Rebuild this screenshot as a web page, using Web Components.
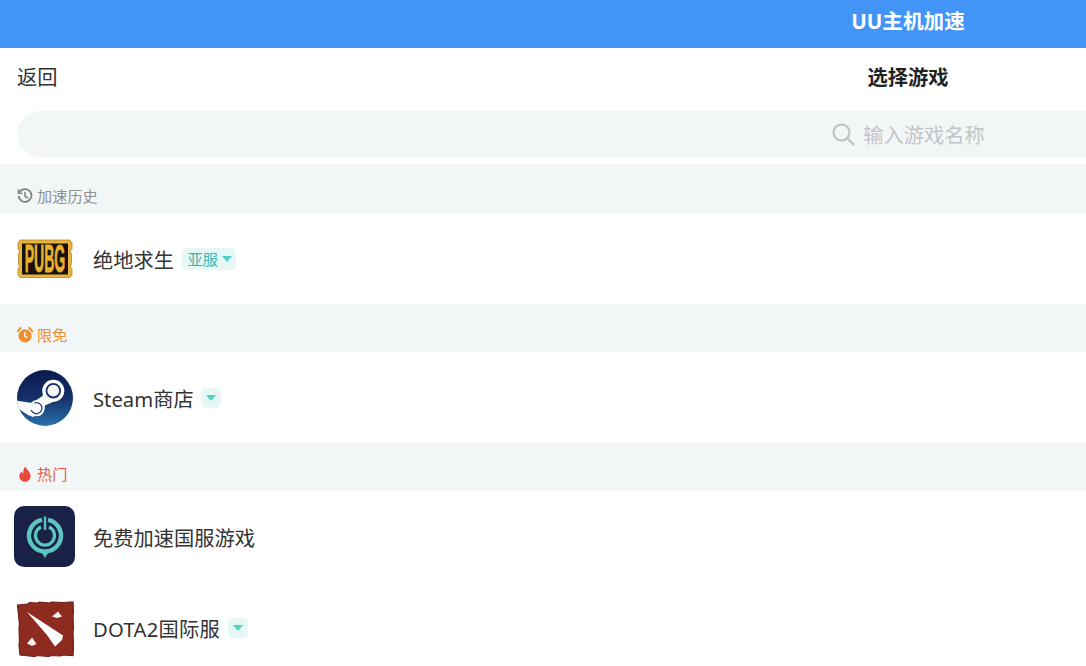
<!DOCTYPE html>
<html lang="zh"><head><meta charset="utf-8"><title>UU主机加速</title>
<style>
html,body{margin:0;padding:0;width:1086px;height:666px;overflow:hidden;background:#fff}
body{font-family:"Noto Sans","Noto Sans CJK SC",sans-serif;color:#333}
</style></head><body>
<uu-app>
  <uu-header slot="top">UU主机加速</uu-header>
  <uu-nav slot="top"></uu-nav>
  <uu-search slot="top"></uu-search>
  <uu-section color="#8e9194" icon="history">加速历史</uu-section>
  <uu-row name="绝地求生" tag="亚服" logo="pubg"></uu-row>
  <uu-section color="#ee8f30" icon="alarm">限免</uu-section>
  <uu-row name="Steam商店" tag="" logo="steam" arrow></uu-row>
  <uu-section color="#e9594a" icon="fire">热门</uu-section>
  <uu-row name="免费加速国服游戏" logo="uu"></uu-row>
  <uu-row name="DOTA2国际服" tag="" logo="dota" arrow ls=".25px"></uu-row>
</uu-app>
<script>
const def=(n,html,init)=>customElements.define(n,class extends HTMLElement{
  constructor(){super();this.attachShadow({mode:'open'}).innerHTML=html;}
  connectedCallback(){init&&init(this,this.shadowRoot);}
});
def('uu-app',`<style>:host{display:block;width:1816px}.top{border-bottom:1px solid #f0f1f2;padding-bottom:7px}</style><div class="top"><slot name="top"></slot></div><slot></slot>`);
def('uu-header',`<style>:host{display:flex;justify-content:center;align-items:center;height:48px;padding-bottom:6px;box-sizing:border-box;background:#4294f7;color:#fff;font-size:20.6px;font-weight:700;line-height:28px}</style><slot></slot>`);
def('uu-nav',`<style>:host{display:grid;grid-template-columns:1fr auto 1fr;align-items:center;height:63px;padding:0 17px;padding-bottom:5px;box-sizing:border-box;font-size:20.25px;color:#333;line-height:28px}b{color:#222}</style><span>返回</span><b>选择游戏</b><span></span>`);
def('uu-search',`<style>:host{display:block;padding:0 17px}
div{height:46px;border-radius:23px;background:#f3f6f7;display:flex;justify-content:center;align-items:center;gap:8px;color:#c3c6c9;font-size:20.25px}
svg{display:block;flex:none}</style><div><svg width="24" height="24" viewBox="0 0 24 24" fill="none" stroke="#bfc2c4" stroke-width="2.2" stroke-linecap="round"><circle cx="10.5" cy="10.5" r="8"/><path d="M16.5 16.5 22.5 22.5"/></svg><span>输入游戏名称</span></div>`);
const secIcons={
 history:`<svg viewBox="0 0 16 16" width="16" height="16" fill="none" stroke="#7f8388" stroke-width="1.8"><path d="M2.6 4.200A6.400 6.400 0 1 1 1.700 8"/><path d="M1.400 1.300v3.900h3.900" stroke-width="1.500"/><path d="M8 4.200V8.400l2.800 1.500" stroke-width="1.600" stroke-linecap="round"/></svg>`,
 alarm:`<svg viewBox="0 0 16 16" width="16" height="16"><circle cx="8" cy="8.800" r="6.600" fill="#ee8f30"/><path d="M7.800 5v4.200l2.600 1.400" fill="none" stroke="#fff" stroke-width="1.400"/><path d="M.6 4.200 3.600 1M15.400 4.200 12.400 1" stroke="#ee8f30" stroke-width="2" stroke-linecap="round"/></svg>`,
 fire:`<svg viewBox="0 0 16 16" width="16" height="16"><path d="M8.400.4c.5 2.800 5.200 5.200 5.200 9.600 0 3.400-2.500 5.800-5.600 5.800s-5.600-2.400-5.600-5.500c0-2.300 1-3.900 2.300-5.100.2 1.300.6 2.100 1.400 2.500C6.100 5 6.600 2.300 8.400.4z" fill="#e9493a"/></svg>`};
def('uu-section',`<style>:host{display:flex;align-items:center;gap:4px;height:48px;padding:13px 0 0 17px;box-sizing:border-box;background:#f3f6f7;font-size:15.2px;line-height:20px}svg{display:block}</style><span id="i" style="display:flex"></span><span id="t"><slot></slot></span>`,(h,s)=>{
  s.getElementById('i').innerHTML=secIcons[h.getAttribute('icon')];
  s.getElementById('t').style.color=h.getAttribute('color');
});
const logos={
 pubg:`<svg width="56" height="40" viewBox="0 0 56 40"><path d="M3 1h50l.5 2 1.500.5v7l-1.500 1v2.500l1 .5v11l-1 .5v2.500l1.500 1v7l-1.500.5-.5 1.500H3l-.5-1.500-1.500-.5v-7l1.500-1v-2.500l-1-.5v-11l1-.5v-2.500L1 10.500v-7l1.500-.5z" fill="#e8b63c" stroke="#b5832a" stroke-width=".8"/><rect x="5" y="4.500" width="46" height="31" fill="#17110a"/><text transform="translate(28 33) scale(.74 2)" text-anchor="middle" font-family="Liberation Sans" font-weight="700" font-size="19" fill="#e9b02c" stroke="#e9b02c" stroke-width=".4">PUBG</text></svg>`,
 steam:`<svg width="56" height="56" viewBox="0 0 56 56"><defs><linearGradient id="g" x1="0" y1="0" x2="0" y2="1"><stop offset="0" stop-color="#0b1a4e"/><stop offset=".5" stop-color="#14306a"/><stop offset="1" stop-color="#2a72aa"/></linearGradient><clipPath id="c"><circle cx="28" cy="28" r="28"/></clipPath></defs><circle cx="28" cy="28" r="28" fill="url(#g)"/><g clip-path="url(#c)"><path d="M28.500 13 25.500 26 15 33-1 30.500V37L11 45 16 47 26 42 28 35.500 38 31z" fill="#fff"/><circle cx="36.300" cy="20.700" r="11" fill="#fff"/><circle cx="36.300" cy="20.700" r="6.800" fill="#f4f7fa" stroke="#14306a" stroke-width="1.800"/><circle cx="19.700" cy="38.300" r="8" fill="#fff"/><path d="M17.500 33a5.500 5.500 0 1 1-3.300 7" fill="none" stroke="#1f4f8a" stroke-width="1.400"/></g></svg>`,
 uu:`<svg width="61" height="61" viewBox="0 0 61 61"><rect width="61" height="61" rx="10" fill="#1a2147"/><g fill="none" stroke="#5cc5c0"><path d="M28 13.800A16 16 0 1 0 34 13.800" stroke-width="4.400"/><path d="M27 21A9.500 9.500 0 1 0 35 21" stroke-width="3.200"/><path d="M31 10.500V24" stroke-width="2.400"/></g><path d="M24 43.500c2 1 5 1.500 7 1.500s5-.5 7-1.500c-2.500 2-5 4-7 8-2-4-4.500-6-7-8z" fill="#5cc5c0" stroke="#5cc5c0" stroke-width=".6"/></svg>`,
 dota:`<svg width="58" height="58" viewBox="0 0 58 58"><path d="M1.500 6l10-1 2-1.500 8 .5 2-1 10 1 2-1 12 .5 9.500-.5.500 11-.5 2 .5 14-.5 3 .5 15.500-.5 8-10-.5-3 1-9-.5-2 1-12-1-2 1-15-1.500-1-10 .5-3-.5-14 .5-3z" fill="#8e2b21" stroke="#6d2018" stroke-width="1.200"/><path d="M11 13 47 36.500 46 41 39 47.500 31 36z" fill="#fff"/><path d="M36 17.500 42 12.500 46 17.500 41 19z" fill="#f6f0ec"/><path d="M11 44.500 16 38.500 20.500 45 16 47z" fill="#f6f0ec"/></svg>`};
def('uu-row',`<style>:host{display:flex;align-items:center;height:91px;padding-left:14px;background:#fff;font-size:20.25px;line-height:28px;color:#333}
.logo{width:61px;display:flex;justify-content:center;align-items:center;margin-right:18px}svg{display:block}
#n{padding-top:3px}
.tag{display:none;margin-left:7.5px;height:22px;border-radius:5px;background:#e5f8f6;color:#3fb3aa;font-size:15.2px;line-height:22px;align-items:center;gap:4px;padding:0 4px 0 6px}
.tag.a{height:20px;width:20px;padding:0;justify-content:center;box-sizing:border-box}
.tag.on{display:inline-flex}
i{display:block;width:0;height:0;border:5.500px solid transparent;border-top:6px solid #4fd1c5;border-bottom:0}</style>
<span class="logo" id="l"></span><span id="n"></span><span class="tag" id="t"><span id="tt"></span><i></i></span>`,(h,s)=>{
  s.getElementById('l').innerHTML=logos[h.getAttribute('logo')];
  const n=s.getElementById('n');n.textContent=h.getAttribute('name');
  if(h.hasAttribute('ls'))n.style.letterSpacing=h.getAttribute('ls');
  const t=s.getElementById('t'),tag=h.getAttribute('tag');
  if(tag){s.getElementById('tt').textContent=tag;t.classList.add('on')}
  else if(h.hasAttribute('arrow')){s.getElementById('tt').remove();t.classList.add('on','a')}
});
</script>
</body></html>
